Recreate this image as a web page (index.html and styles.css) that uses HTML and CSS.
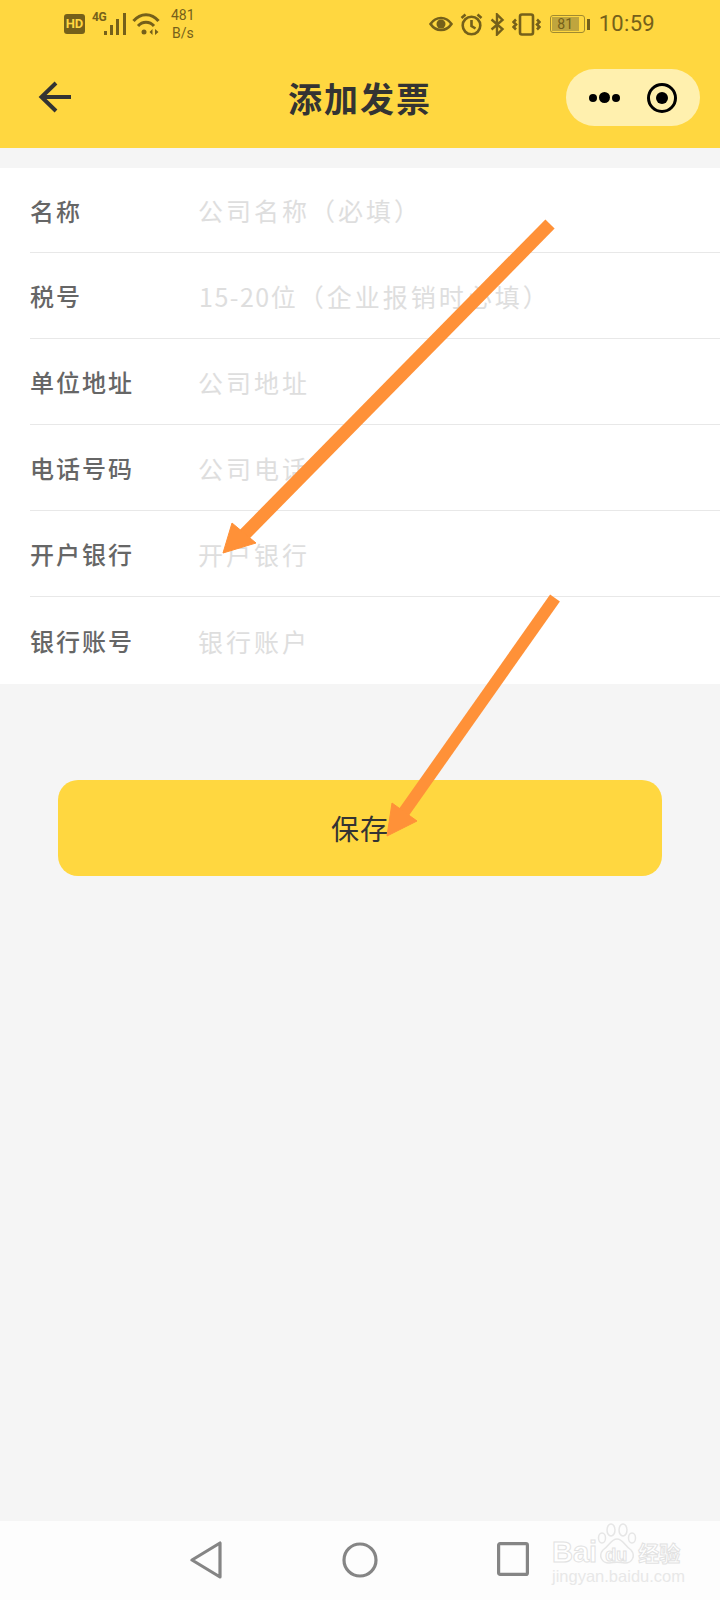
FILE: index.html
```html
<!DOCTYPE html>
<html lang="zh-CN">
<head>
  <meta charset="UTF-8" />
  <meta name="viewport" content="width=device-width, initial-scale=1.0" />
  <title>添加发票</title>
  <link rel="stylesheet" href="styles.css">
</head>
<body>
  <div class="page">
    <header class="top">
      <div class="status">
        <span class="hd">HD</span>
        <span class="net">4G</span>
        <svg class="signal" width="23" height="24" viewBox="0 0 23 24" fill="#75601a"><rect x="0" y="19" width="3" height="4"/><rect x="6" y="13" width="3" height="10"/><rect x="12" y="7" width="3" height="16"/><rect x="19" y="1" width="3" height="22"/></svg>
        <svg class="wifi" width="28" height="24" viewBox="0 0 28 24" fill="none" stroke="#75601a" stroke-width="3"><path d="M1.500 9C8.500 0.500 19.500 0.500 26.500 9"/><path d="M6 14C10.500 9 17.500 9 22 14"/><circle cx="12" cy="20" r="2.500" fill="#75601a" stroke="none"/><path d="M20.500 17l-3 3 3 3zM23 17l3.500 3-3.500 3z" fill="#75601a" stroke="none"/></svg>
        <div class="speed"><span>481</span><span>B/s</span></div>
        <div class="status-right">
          <svg width="24" height="18" viewBox="0 0 24 18" fill="none" stroke="#75601a" stroke-width="2.600"><path d="M1.500 9C7 1 17 1 22.500 9C17 17 7 17 1.500 9Z"/><circle cx="12" cy="9" r="4.500" fill="#75601a" stroke="none"/></svg>
          <svg width="23" height="23" viewBox="0 0 23 23" fill="none" stroke="#75601a" stroke-width="2.600"><circle cx="11.500" cy="12.500" r="8.800"/><path d="M11.500 7v6l4 2.500"/><path d="M1.500 5L5.500 1.500M21.500 5L17.500 1.500"/></svg>
          <svg width="15" height="23" viewBox="0 0 15 23" fill="none" stroke="#75601a" stroke-width="2.400"><path d="M1.500 6.500l11 9.500-5.500 5.500V1.500l5.500 5.500-11 9.500"/></svg>
          <svg width="29" height="23" viewBox="0 0 29 23" fill="none" stroke="#75601a" stroke-width="2.600"><rect x="8" y="1.500" width="13" height="20" rx="2"/><path d="M4 6.500L1.500 9 4 11.500 1.500 14 4 16.500M25 6.500l2.500 2.500-2.500 2.500 2.500 2.500-2.500 2.500"/></svg>
          <div class="battery"><div class="battery-box"><div class="battery-fill"></div><span class="battery-num">81</span></div><div class="battery-tip"></div></div>
          <span class="clock">10:59</span>
        </div>
      </div>
      <div class="titlebar">
        <svg class="back" width="34" height="34" viewBox="0 0 34 34" fill="none" stroke="#333" stroke-width="4"><path d="M3 17H33"/><path d="M18 3L3.500 17 18 31"/></svg>
        <h1 class="title">添加发票</h1>
        <div class="capsule">
          <div class="dots"><i></i><i class="big"></i><i></i></div>
          <div class="target"><i></i></div>
        </div>
      </div>
    </header>

    <section class="form">
      <div class="row"><div class="label">名称</div><div class="hint">公司名称（必填）</div></div>
      <div class="row"><div class="label">税号</div><div class="hint"><span class="hint-num">15-20</span>位（企业报销时必填）</div></div>
      <div class="row"><div class="label">单位地址</div><div class="hint">公司地址</div></div>
      <div class="row"><div class="label">电话号码</div><div class="hint">公司电话</div></div>
      <div class="row"><div class="label">开户银行</div><div class="hint">开户银行</div></div>
      <div class="row"><div class="label">银行账号</div><div class="hint">银行账户</div></div>
    </section>

    <div class="save-wrap"><button class="save">保存</button></div>

    <nav class="nav">
      <svg width="32" height="38" viewBox="0 0 32 38" fill="none" stroke="#858585" stroke-width="3.200" stroke-linejoin="round"><path d="M30 2V36L2 19Z"/></svg>
      <svg width="36" height="36" viewBox="0 0 36 36" fill="none" stroke="#858585" stroke-width="3.200"><circle cx="18" cy="18" r="16"/></svg>
      <svg width="32" height="34" viewBox="0 0 32 34" fill="none" stroke="#858585" stroke-width="3.200" stroke-linejoin="round"><rect x="1.600" y="1.600" width="28.800" height="30.800" rx="1.500"/></svg>
    </nav>
  </div>

  <!-- annotation arrows drawn on top of the screenshot -->
  <svg class="marks" width="720" height="1600" viewBox="0 0 720 1600">
    <g fill="#ff9138" stroke="#ff9138" stroke-linejoin="round">
      <path d="M550 224L236 543" stroke-width="13" fill="none"/>
      <path d="M223 553L232 523L256 543Z" stroke-width="1"/>
      <path d="M555 598L402 815" stroke-width="12" fill="none"/>
      <path d="M387 836L392 803L417 821Z" stroke-width="1"/>
    </g>
  </svg>

  <div class="wm">
    <svg class="wm-paw" width="40" height="42" viewBox="0 0 40 42" fill="none" stroke="#e6e6e6" stroke-width="1.500"><ellipse cx="5" cy="15" rx="3.500" ry="5"/><ellipse cx="14" cy="7" rx="4" ry="6"/><ellipse cx="26" cy="7" rx="4" ry="6"/><ellipse cx="35" cy="15" rx="3.500" ry="5"/><path d="M20 16C14 16 12 23 6 27C1 33 5 40 12 40C17 39 23 39 28 40C35 40 39 33 34 27C28 23 26 16 20 16Z"/></svg>
    <div class="wm-line"><span class="wm-bai">Bai</span><span class="wm-du">du</span><span class="wm-jy">经验</span></div>
    <div class="wm-url">jingyan.baidu.com</div>
  </div>
</body>
</html>
```

FILE: styles.css
```css
body    { margin: 0; background: #f5f5f5; font-family: "Noto Sans CJK SC", "Noto Sans", sans-serif; }
.page   { width: 720px; height: 1600px; display: flex; flex-direction: column; overflow: hidden; }

/* yellow header */
.top    { height: 148px; background: #ffd740; flex: none; }

.status { height: 48px; display: flex; align-items: center; padding: 0 65px 0 64px; color: #75601a; }
.hd     { width: 21px; height: 20px; margin-top: -1px; border-radius: 3px; background: #75601a; color: #ffd740;
          font: bold 13px/20px "Roboto", sans-serif; text-align: center; }
.net    { width: 13px; margin: -14px 0 0 7px; font: bold 12px/12px "Roboto", sans-serif; letter-spacing: -.5px; white-space: nowrap; }
.signal { margin-left: -1px; }
.wifi   { margin-left: 5px; }
.speed  { display: flex; flex-direction: column; margin-left: 11px; font: 14px/18px "Roboto", sans-serif; align-items: center; }
.status-right { margin-left: auto; display: flex; align-items: center; gap: 7px; }
.battery { display: flex; align-items: center; margin-left: 2px; }
.battery-box { position: relative; width: 33px; height: 16px; border: 1px solid #a08a30; border-radius: 3px; }
.battery-fill { width: 27px; height: 14px; margin: 1px; background: #bfa53e; }
.battery-num { position: absolute; left: 0; right: 4px; top: 0; text-align: center; font: 14px/16px "Roboto", sans-serif; }
.battery-tip { width: 3px; height: 11px; margin-left: 2px; background: #75601a; }
.clock  { margin-left: 2px; font: 22px/26px "Roboto", sans-serif; letter-spacing: .3px; }

.titlebar { height: 100px; position: relative; display: flex; align-items: center; justify-content: center; }
.back   { position: absolute; left: 38px; top: 32px; }
.title  { margin: 0; font-size: 34px; font-weight: 700; line-height: 44px; letter-spacing: 2px; color: #333; }
.capsule { position: absolute; left: 566px; top: 21px; width: 134px; height: 57px; border-radius: 29px;
           background: #fff0ae; display: flex; align-items: center; }
.dots   { display: flex; align-items: center; gap: 2px; margin-left: 23px; }
.dots i { width: 8px; height: 8px; border-radius: 50%; background: #000; }
.dots i.big { width: 11px; height: 11px; }
.target { width: 30px; height: 30px; box-sizing: border-box; margin-left: 27px; border: 3px solid #000; border-radius: 50%;
          display: flex; align-items: center; justify-content: center; }
.target i { width: 12px; height: 12px; border-radius: 50%; background: #000; }

/* form */
.form   { margin-top: 20px; background: #fff; padding-left: 30px; flex: none; }
.row    { height: 85px; display: flex; align-items: center; border-bottom: 1px solid #e8e8e8; }
.row:first-child { height: 84px; }
.row:last-child { height: 87px; border-bottom: none; }
.label  { width: 168px; flex: none; font-size: 24px; font-weight: 500; letter-spacing: 2px; color: #666; }
.hint   { font-size: 25px; letter-spacing: 3px; color: #dedede; white-space: nowrap; }
.hint-num { letter-spacing: 1.500px; margin-left: 1px; }

/* save button */
.save-wrap { padding: 96px 58px 0; flex: none; }
.save   { display: block; width: 100%; height: 96px; border: none; border-radius: 20px; background: #ffd740;
          font-family: inherit; font-size: 28px; letter-spacing: 1px; color: #333; }

/* android nav */
.nav    { margin-top: auto; height: 79px; flex: none; background: #fdfdfd; position: relative; }
.nav svg { position: absolute; top: 20px; }
.nav svg:nth-child(1) { left: 190px; }
.nav svg:nth-child(2) { left: 342px; top: 21px; }
.nav svg:nth-child(3) { left: 497px; top: 21px; }

/* overlays */
.marks  { position: absolute; left: 0; top: 0; pointer-events: none; }
.wm     { position: absolute; left: 552px; top: 1522px; width: 130px; color: #fff; text-align: center; }
.wm-paw { position: absolute; left: 45px; top: 1px; }
.wm-line { position: absolute; left: 0; top: 18px; width: 130px; display: flex; align-items: center; }
.wm-bai { font: bold 29px/24px "Liberation Sans", sans-serif; -webkit-text-stroke: 1px #e2e2e2; }
.wm-du  { margin: 6px 0 0 8px; font: bold 18px/18px "Liberation Sans", sans-serif; -webkit-text-stroke: 1px #e2e2e2; }
.wm-jy  { margin-left: 11px; font-size: 21px; font-weight: 700; line-height: 24px; -webkit-text-stroke: 1px #e2e2e2; }
.wm-url { position: absolute; left: 0; top: 45px; width: 130px; font: 16.500px/18px "Liberation Sans", sans-serif; color: #e8e8e8; white-space: nowrap; }
```
